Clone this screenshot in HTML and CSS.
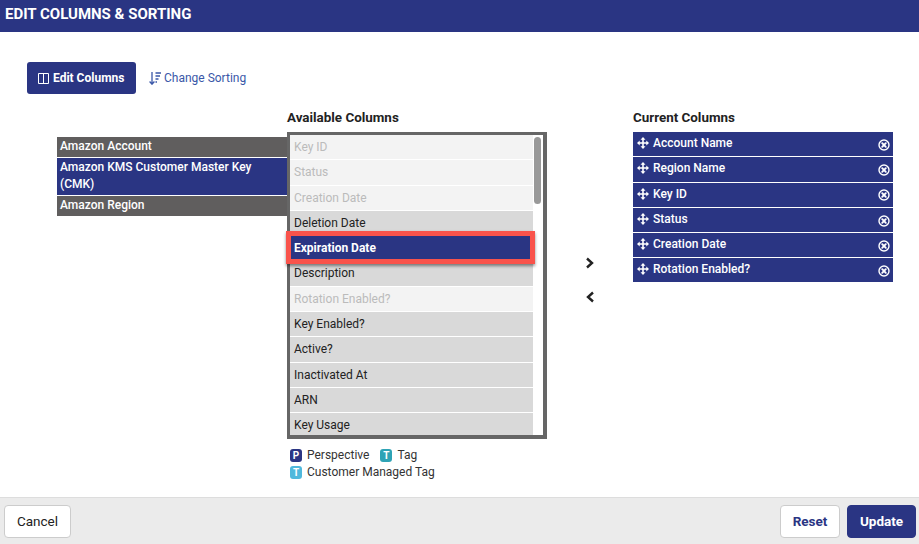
FILE: index.html
```html
<!DOCTYPE html>
<html lang="en">
<head>
<meta charset="utf-8">
<title>Edit Columns &amp; Sorting</title>
<link rel="stylesheet" href="styles.css">
</head>
<body>
<svg class="sprites" width="0" height="0" aria-hidden="true">
  <symbol id="move" viewBox="0 0 12 12"><path d="M6 0 8.500 2.700H6.800V5.200H9.300V3.500L12 6 9.300 8.500V6.800H6.800V9.300H8.500L6 12 3.500 9.300H5.200V6.800H2.700V8.500L0 6 2.700 3.500V5.200H5.200V2.700H3.500Z" fill="currentColor"/></symbol>
  <symbol id="close" viewBox="0 0 12 12"><circle cx="6" cy="6" r="5" fill="none" stroke="currentColor" stroke-width="1.400"/><path d="M4.200 4.200 7.800 7.800M7.800 4.200 4.200 7.800" stroke="currentColor" stroke-width="1.900" stroke-linecap="round"/></symbol>
</svg>
<div class="page">
  <header class="titlebar">EDIT COLUMNS &amp; SORTING</header>
  <main class="content">
    <nav class="tabs">
      <button class="tab tab-active" type="button">
        <svg class="tab-icon" viewBox="0 0 11 11" width="11" height="11"><path d="M.5.500H10.500V10.500H.5ZM5.500.500V10.500" fill="none" stroke="currentColor"/></svg>
        <span class="tab-label">Edit Columns</span>
      </button>
      <button class="tab tab-link" type="button">
        <svg class="tab-icon" viewBox="0 0 12 13" width="12" height="13"><path d="M3 0V12M.6 9.500 3 12.200 5.400 9.500" fill="none" stroke="currentColor" stroke-width="1.300"/><path d="M6.500 1H12M6.500 4H11M6.500 7H9.500M6.500 10H8" fill="none" stroke="currentColor" stroke-width="1.300"/></svg>
        <span class="tab-label">Change Sorting</span>
      </button>
    </nav>
    <section class="columns">
      <ul class="groups">
        <li class="group">Amazon Account</li>
        <li class="group group-selected">Amazon KMS Customer Master Key (CMK)</li>
        <li class="group">Amazon Region</li>
      </ul>
      <div class="available">
        <h2 class="col-title">Available Columns</h2>
        <div class="listbox">
          <ul class="list">
            <li class="item item-used">Key ID</li>
            <li class="item item-used">Status</li>
            <li class="item item-used">Creation Date</li>
            <li class="item">Deletion Date</li>
            <li class="item item-selected">Expiration Date<span class="callout"></span></li>
            <li class="item">Description</li>
            <li class="item item-used">Rotation Enabled?</li>
            <li class="item">Key Enabled?</li>
            <li class="item">Active?</li>
            <li class="item">Inactivated At</li>
            <li class="item">ARN</li>
            <li class="item item-last">Key Usage</li>
          </ul>
          <div class="scrollbar"><div class="thumb"></div></div>
        </div>
        <div class="legend">
          <div class="legend-row">
            <span class="legend-entry"><i class="badge badge-p">P</i>Perspective</span>
            <span class="legend-entry"><i class="badge badge-t">T</i>Tag</span>
          </div>
          <div class="legend-row">
            <span class="legend-entry"><i class="badge badge-c">T</i>Customer Managed Tag</span>
          </div>
        </div>
      </div>
      <div class="arrows">
        <svg viewBox="0 0 10 12" width="10" height="12"><path d="M2 1.500 7 6 2 10.500" fill="none" stroke="currentColor" stroke-width="2.400"/></svg>
        <svg viewBox="0 0 10 12" width="10" height="12"><path d="M8 1.500 3 6 8 10.500" fill="none" stroke="currentColor" stroke-width="2.400"/></svg>
      </div>
      <div class="current">
        <h2 class="col-title">Current Columns</h2>
        <ul class="current-list">
          <li class="cur"><svg class="move"><use href="#move"/></svg><span class="cur-name">Account Name</span><svg class="close"><use href="#close"/></svg></li>
          <li class="cur"><svg class="move"><use href="#move"/></svg><span class="cur-name">Region Name</span><svg class="close"><use href="#close"/></svg></li>
          <li class="cur"><svg class="move"><use href="#move"/></svg><span class="cur-name">Key ID</span><svg class="close"><use href="#close"/></svg></li>
          <li class="cur"><svg class="move"><use href="#move"/></svg><span class="cur-name">Status</span><svg class="close"><use href="#close"/></svg></li>
          <li class="cur"><svg class="move"><use href="#move"/></svg><span class="cur-name">Creation Date</span><svg class="close"><use href="#close"/></svg></li>
          <li class="cur"><svg class="move"><use href="#move"/></svg><span class="cur-name">Rotation Enabled?</span><svg class="close"><use href="#close"/></svg></li>
        </ul>
      </div>
    </section>
  </main>
  <footer class="footer">
    <button class="btn btn-cancel" type="button">Cancel</button>
    <div class="footer-right">
      <button class="btn btn-reset" type="button">Reset</button>
      <button class="btn btn-update" type="button">Update</button>
    </div>
  </footer>
</div>
</body>
</html>
```
FILE: styles.css
```css
* { box-sizing: border-box; }
html, body { margin: 0; height: 100%; }
body { font-family: Roboto, "Liberation Sans", sans-serif; font-size: 12px; color: #222; background: #fff; overflow: hidden; }
ul { list-style: none; margin: 0; padding: 0; }
button { font-family: inherit; cursor: pointer; }
.sprites { position: absolute; }
.page { height: 544px; display: flex; flex-direction: column; }

.titlebar { height: 32px; flex: none; background: #2a3583; color: #fff; font-size: 15px; font-weight: 700; line-height: 28px; padding-left: 5px; }

.content { flex: 1; padding: 30px 26px 0 27px; }
.tabs { display: flex; align-items: center; gap: 13px; height: 32px; }
.tab { display: flex; align-items: center; gap: 4px; border: 0; background: none; font-size: 12px; height: 32px; padding: 0; }
.tab-active { width: 109px; padding-left: 11px; background: #2a3583; color: #fff; font-weight: 700; border-radius: 3px; }
.tab-link { color: #3a57a8; gap: 3px; }

.columns { display: flex; align-items: flex-start; margin-top: 15px; padding-left: 30px; }
.col-title { margin: 0; height: 23px; font-size: 13.400px; font-weight: 700; line-height: 17px; color: #222; }

.groups { width: 230px; flex: none; margin-top: 28px; }
.group { background: #605e5e; color: #fff; font-weight: 500; font-size: 12px; line-height: 17px; padding: 1px 3px 2px; margin-bottom: 1px; }
.group-selected { background: #2a3583; }

.available { width: 260px; flex: none; }
.listbox { display: flex; height: 307px; border: solid #666; border-width: 3px 4px 4px 3px; }
.list { width: 243px; flex: none; }
.item { position: relative; height: 25.300px; border-bottom: 1px solid #fff; background: #d9d9d9; color: #222; font-size: 12px; line-height: 24px; padding-left: 4px; }
.item-used { background: #f3f3f3; color: #bbb; }
.item-selected { z-index: 1; background: #2a3583; color: #fff; font-weight: 700; }
.item-last { height: 21.700px; border-bottom: 0; }
.callout { position: absolute; top: -5px; left: -4px; right: -2px; height: 33px; border: 5px solid #f9534b; box-shadow: 0 2px 3px rgba(0, 0, 0, .45); }
.scrollbar { flex: 1; padding: 2px 2px 0 1px; }
.thumb { height: 67px; background: #999; border-radius: 4px; }

.legend { margin-top: 7px; padding-left: 3px; color: #333; font-size: 12px; }
.legend-row { display: flex; gap: 11px; height: 17px; align-items: center; }
.legend-entry { display: flex; align-items: center; gap: 5px; }
.badge { width: 12px; height: 13px; margin-top: 2px; border-radius: 3px; color: #fff; font-size: 10px; font-weight: 700; font-style: normal; text-align: center; line-height: 13px; }
.badge-p { background: #2a3583; }
.badge-t { background: #2ea3b5; }
.badge-c { background: #4fb8dc; }

.arrows { width: 86px; flex: none; display: flex; flex-direction: column; align-items: center; gap: 22px; margin-top: 148px; color: #222; }

.current { width: 260px; flex: none; }
.current-list { display: block; }
.cur { display: flex; align-items: center; height: 25.300px; border-bottom: 1px solid #fff; background: #2a3583; color: #fff; font-weight: 500; font-size: 12px; padding: 0 3px 2px 4px; }
.cur:last-child { height: 24px; border-bottom: 0; }
.cur-name { flex: 1; margin-left: 4px; }
.move { width: 12px; height: 12px; }
.close { width: 12px; height: 12px; margin-top: 3px; }

.footer { height: 47px; flex: none; display: flex; justify-content: space-between; align-items: center; background: #ebebeb; border-top: 1px solid #ddd; padding: 0 3px 0 4px; }
.footer-right { display: flex; gap: 7px; }
.btn { height: 33px; border-radius: 4px; font-size: 13.500px; border: 1px solid #ccc; background: #fff; padding: 0; }
.btn-cancel { width: 67px; color: #222; }
.btn-reset { width: 60px; color: #2a3583; font-weight: 700; }
.btn-update { width: 69px; background: #2a3583; border-color: #2a3583; color: #fff; font-weight: 700; }
```
